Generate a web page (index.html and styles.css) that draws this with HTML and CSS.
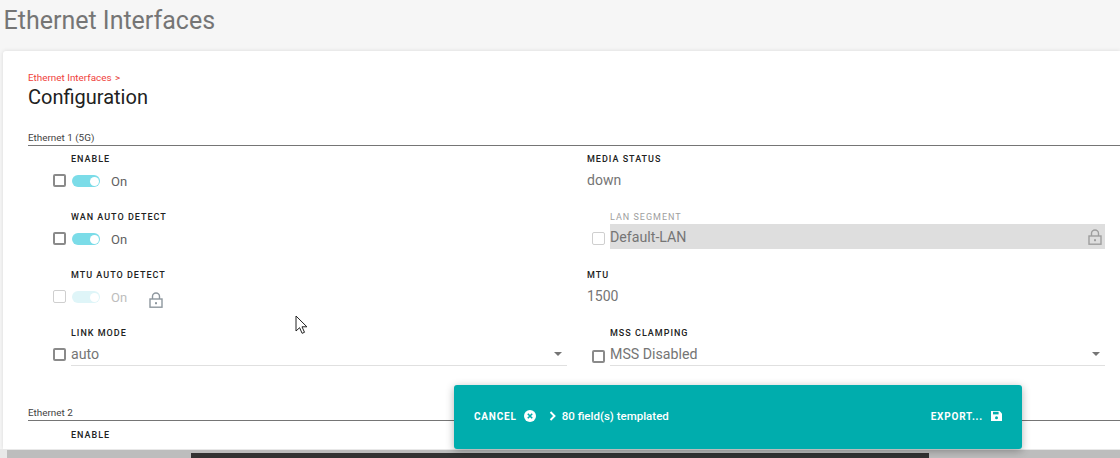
FILE: index.html
```html
<!DOCTYPE html>
<html lang="en">
<head>
<meta charset="utf-8">
<title>Ethernet Interfaces</title>
<link rel="stylesheet" href="styles.css">
</head>
<body>
<h1 class="page-title">Ethernet Interfaces</h1>
<main class="card">
  <div class="crumb">Ethernet Interfaces <span class="crumb-sep">&gt;</span></div>
  <h2 class="card-title">Configuration</h2>

  <div class="section-label">Ethernet 1 (5G)</div>
  <div class="row">
    <div class="field">
      <div class="label">ENABLE</div>
      <span class="check"></span>
      <div class="control"><span class="toggle"></span><span class="toggle-text">On</span></div>
    </div>
    <div class="field plain">
      <div class="label">MEDIA STATUS</div>
      <div class="static">down</div>
    </div>
  </div>
  <div class="row">
    <div class="field">
      <div class="label">WAN AUTO DETECT</div>
      <span class="check"></span>
      <div class="control"><span class="toggle"></span><span class="toggle-text">On</span></div>
    </div>
    <div class="field right">
      <div class="label muted">LAN SEGMENT</div>
      <span class="check faint"></span>
      <div class="locked">Default-LAN
        <svg class="lock lock-grey" viewBox="0 0 14 16"><path d="M3.5 7V4.5a3.5 3.5 0 0 1 7 0V7" fill="none" stroke="currentColor" stroke-width="1.4"/><rect x="1" y="7" width="12" height="8.2" fill="none" stroke="currentColor" stroke-width="1.4"/><rect x="6" y="10.2" width="2" height="2" fill="currentColor"/></svg>
      </div>
    </div>
  </div>
  <div class="row">
    <div class="field">
      <div class="label">MTU AUTO DETECT</div>
      <span class="check faint"></span>
      <div class="control dim">
        <span class="toggle"></span><span class="toggle-text">On</span>
        <svg class="lock lock-inline" viewBox="0 0 14 16"><path d="M3.5 7V4.5a3.5 3.5 0 0 1 7 0V7" fill="none" stroke="currentColor" stroke-width="1.4"/><rect x="1" y="7" width="12" height="8.2" fill="none" stroke="currentColor" stroke-width="1.4"/><rect x="6" y="10.2" width="2" height="2" fill="currentColor"/></svg>
      </div>
    </div>
    <div class="field plain">
      <div class="label">MTU</div>
      <div class="static">1500</div>
    </div>
  </div>
  <div class="row row-last">
    <div class="field">
      <div class="label">LINK MODE</div>
      <span class="check"></span>
      <div class="select">auto<span class="caret"></span></div>
    </div>
    <div class="field right">
      <div class="label">MSS CLAMPING</div>
      <span class="check"></span>
      <div class="select">MSS Disabled<span class="caret"></span></div>
    </div>
  </div>

  <div class="section-label">Ethernet 2</div>
  <div class="row row-next">
    <div class="field">
      <div class="label">ENABLE</div>
    </div>
  </div>
</main>
<div class="bottom-bar"><div class="bottom-dark"></div></div>

<div class="toast">
  <div class="toast-left">
    <span class="toast-action">CANCEL</span>
    <svg class="icon-cancel" viewBox="0 0 12 12"><circle cx="6" cy="6" r="6" fill="#fff"/><path d="M3.8 3.8l4.4 4.4M8.2 3.8l-4.4 4.4" stroke="#00adad" stroke-width="1.6"/></svg>
    <svg class="icon-chevron" viewBox="0 0 8 10"><path d="M1.5 1l4 4-4 4" fill="none" stroke="#fff" stroke-width="1.9"/></svg>
    <span class="toast-count">80 field(s) templated</span>
  </div>
  <div class="toast-right">
    <span class="toast-action">EXPORT...</span>
    <svg class="icon-save" viewBox="0 0 11 10"><path d="M0 0h8.5L11 2.5V10H0z" fill="#fff"/><rect x="2" y="0.8" width="5.6" height="2.6" fill="#00adad"/><circle cx="5.5" cy="6.7" r="1.5" fill="#00adad"/></svg>
  </div>
</div>

<svg class="cursor" viewBox="0 0 13 20"><path d="M1 1v15l3.6-3.3 2.5 5.6 2.4-1-2.5-5.5h4.9z" fill="#fff" stroke="#222" stroke-width="1"/></svg>
</body>
</html>
```

FILE: styles.css
```css
* { box-sizing: border-box; }
html, body { margin: 0; height: 458px; overflow: hidden; }
body {
  background: #f6f6f6;
  font-family: Roboto, "Liberation Sans", sans-serif;
  position: relative;
  display: flex;
  flex-direction: column;
}
.page-title {
  margin: 0;
  height: 51px;
  padding: 7px 0 0 3.5px;
  font-size: 25px;
  line-height: 28px;
  font-weight: 400;
  color: #757575;
}
.card {
  margin-left: 3px;
  width: 1117px;
  height: 398px;
  flex: none;
  background: #fff;
  border-radius: 3px 0 0 0;
  box-shadow: 0 0 4px rgba(0,0,0,.12);
  padding: 21px 0 0 25px;
  overflow: hidden;
}
.crumb { font-size: 9.9px; line-height: 11px; color: #f0413c; }
.crumb-sep { color: #e53935; margin-left: 1px; }
.card-title {
  margin: 2px 0 0;
  font-size: 20px;
  line-height: 24px;
  font-weight: 400;
  color: #212121;
}
.section-label {
  margin-top: 23px;
  height: 14px;
  font-size: 9.9px;
  line-height: 11px;
  color: #424242;
  border-bottom: 1px solid #757575;
  width: 1092px;
}
.row-last + .section-label { margin-top: 0; }
.row {
  display: grid;
  grid-template-columns: 559px 518px;
  height: 58px;
  padding-top: 8px;
}
.row-last { height: 87px; }
.row-next { padding-top: 9px; }
.field {
  display: grid;
  grid-template-columns: 43px 1fr;
  grid-template-rows: 12px 28px;
  align-content: start;
}
.field.right { grid-template-columns: 23px 1fr; }
.field.plain { grid-template-columns: 1fr; }
.label {
  grid-column: -2;
  font-size: 9px;
  line-height: 11px;
  font-weight: 500;
  letter-spacing: 1px;
  color: #212121;
}
.label.muted { color: #9e9e9e; font-weight: 400; }
.check {
  grid-column: 1;
  grid-row: 2;
  justify-self: end;
  align-self: center;
  margin-right: 5px;
  margin-top: 1px;
  width: 13px;
  height: 13px;
  border: 2px solid #8a8a8a;
  border-radius: 2px;
}
.row-last .check { margin-top: 1px; }
.row-last .right .check { margin-top: 4px; }
.check.faint { border: 1.5px solid #cfcfcf; }
.control {
  grid-column: 2;
  grid-row: 2;
  display: flex;
  align-items: center;
  padding-top: 2px;
  color: #616161;
}
.toggle {
  margin-left: 1px;
  width: 28px;
  height: 12px;
  border-radius: 6px;
  background: #7bdce8;
  position: relative;
}
.toggle::after {
  content: "";
  position: absolute;
  right: 1px;
  top: 1.5px;
  width: 9px;
  height: 9px;
  border-radius: 50%;
  background: #fff;
}
.toggle-text { margin-left: 11px; font-size: 13px; }
.dim .toggle { background: #dff5f8; }
.dim .toggle-text { color: #bdbdbd; }
.lock { width: 14px; height: 16px; flex: none; }
.lock-inline { margin-left: 22px; color: #8e979e; margin-top: 6px; }
.lock-grey { color: #9e9e9e; }
.static {
  font-size: 14px;
  line-height: 28px;
  color: #757575;
}
.locked {
  grid-column: 2;
  grid-row: 2;
  height: 25px;
  background: #dedede;
  display: flex;
  align-items: center;
  justify-content: space-between;
  padding-right: 3px;
  font-size: 14.2px;
  color: #757575;
}
.select {
  grid-column: 2;
  grid-row: 2;
  display: flex;
  align-items: center;
  justify-content: space-between;
  height: 25px;
  padding: 2px 5px 0 0;
  margin-top: 1px;
  border-bottom: 1px solid #e0e0e0;
  font-size: 14.2px;
  color: #757575;
}
.field:not(.right) .select { margin-right: 20px; }
.caret {
  width: 0;
  height: 0;
  border-left: 4.5px solid transparent;
  border-right: 4.5px solid transparent;
  border-top: 4.5px solid #757575;
}
.bottom-bar {
  flex: none;
  height: 9px;
  padding: 1px 0 0 7px;
  background: #e8e8e8;
}
.bottom-dark {
  height: 8px;
  background: linear-gradient(#bdbdbd 3px, transparent 3px), linear-gradient(90deg, #bdbdbd 184px, #333 184px, #333 922px, #bdbdbd 922px);
}
.toast {
  position: absolute;
  left: 454px;
  top: 385px;
  width: 568px;
  height: 64px;
  background: #00adad;
  border-radius: 3px;
  box-shadow: 0 2px 8px rgba(0,0,0,.3);
  color: #fff;
  display: flex;
  align-items: center;
  justify-content: space-between;
  padding: 0 20px 2px;
  font-weight: 500;
}
.toast-left, .toast-right { display: flex; align-items: center; }
.toast-action { font-size: 10px; font-weight: 700; letter-spacing: .8px; }
.icon-cancel { width: 12px; height: 12px; margin-left: 7px; }
.icon-chevron { width: 8px; height: 10px; margin-left: 13px; }
.toast-count { margin-left: 5px; font-size: 11.5px; }
.icon-save { width: 11px; height: 10px; margin-left: 8px; }
.cursor {
  position: absolute;
  left: 295px;
  top: 315px;
  width: 13px;
  height: 20px;
}
```
